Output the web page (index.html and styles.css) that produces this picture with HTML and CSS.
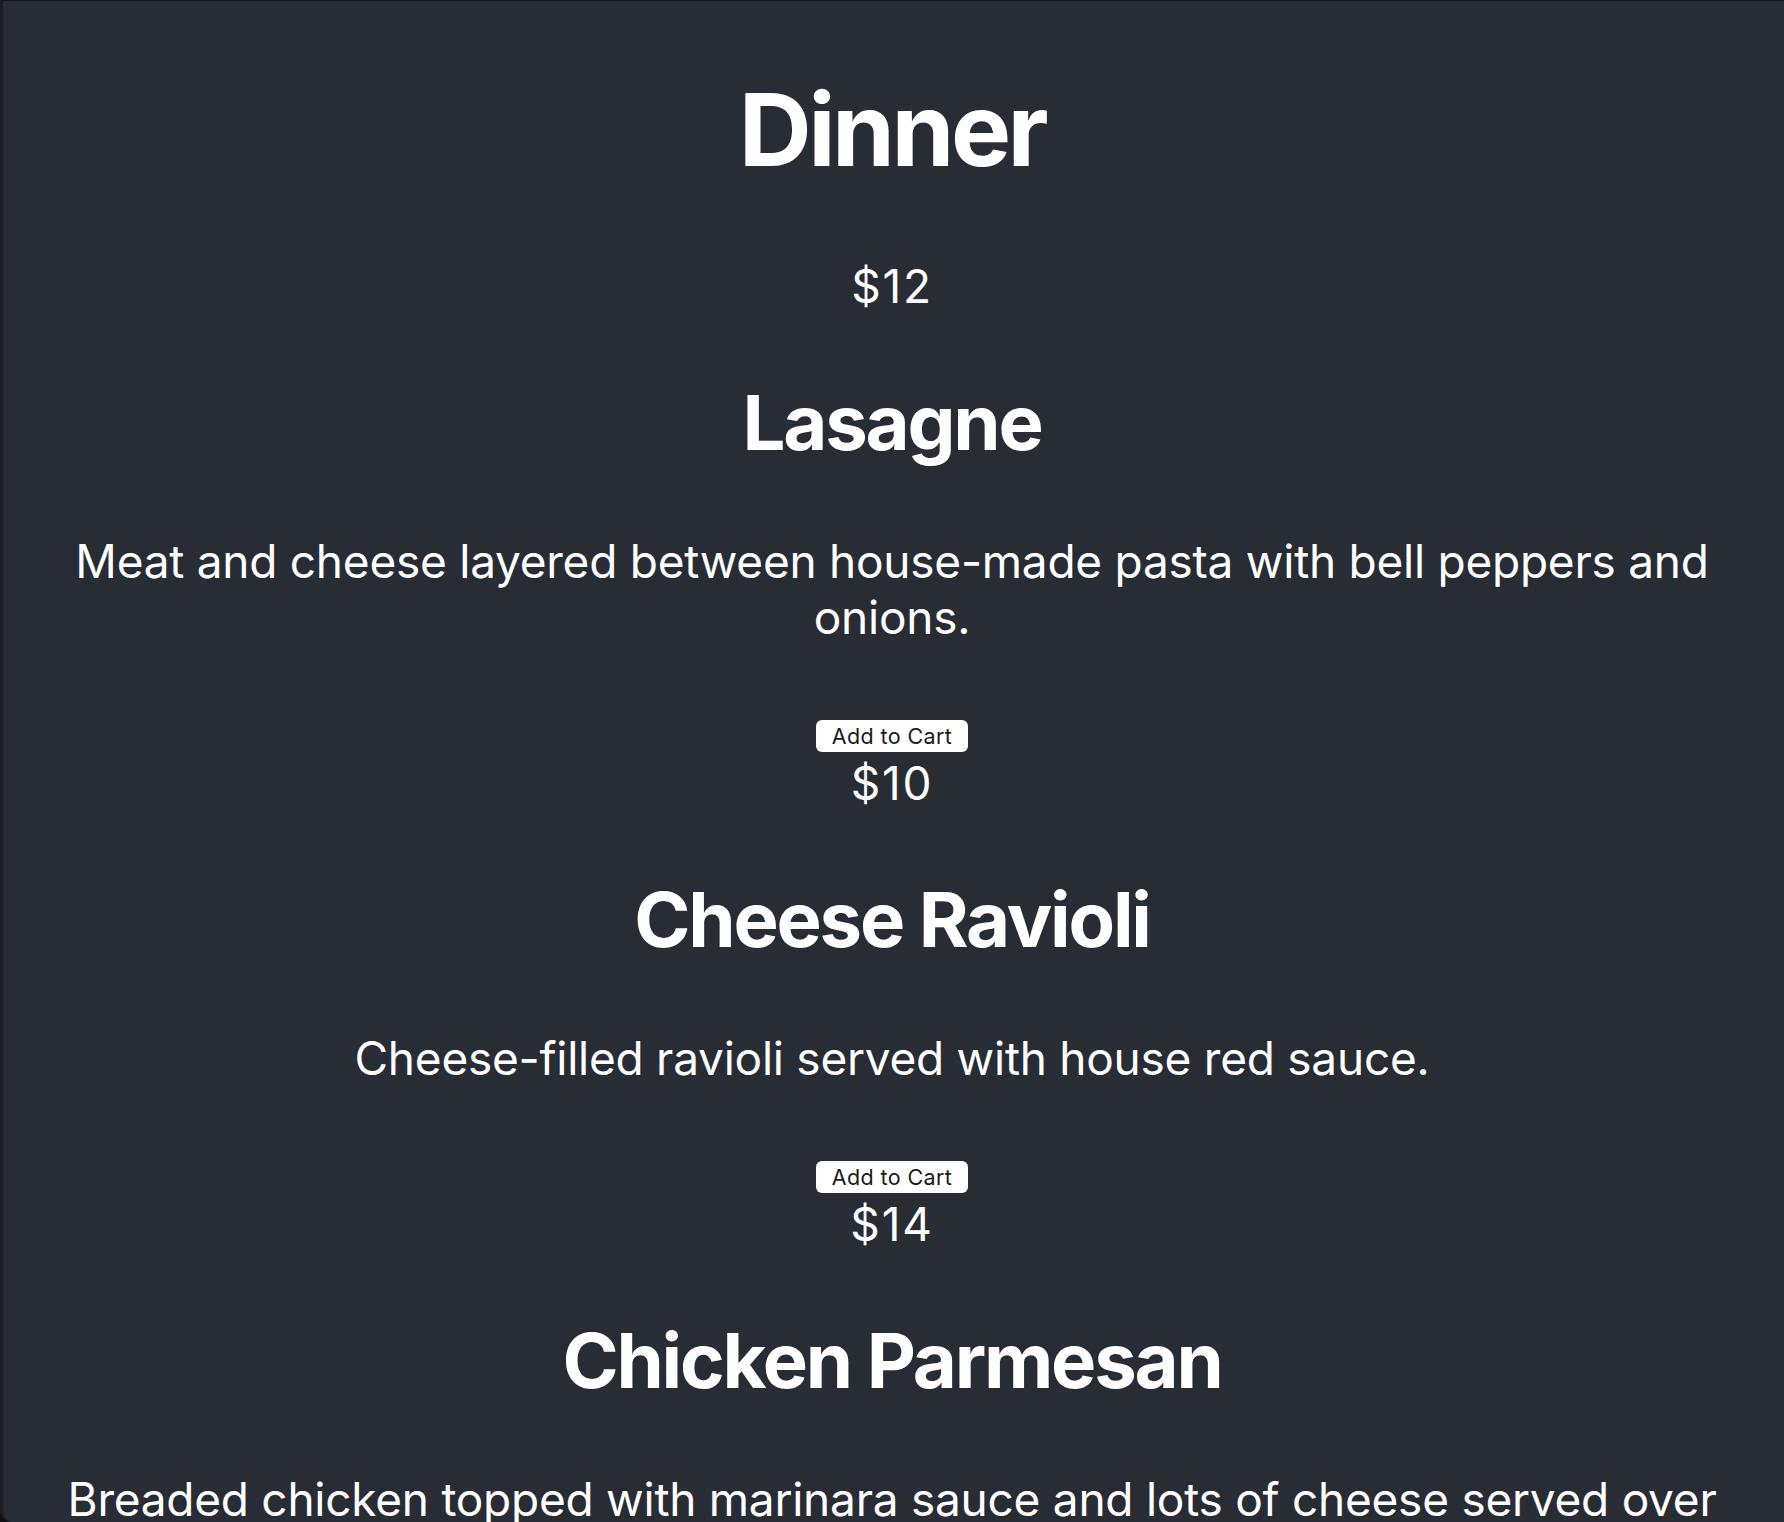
FILE: index.html
```html
<!DOCTYPE html>
<html lang="en">
<head>
<meta charset="utf-8">
<title>Dinner</title>
<link rel="stylesheet" href="styles.css">
</head>
<body>
<div class="window">
  <main class="menu">
    <h1 class="menu-title">Dinner</h1>
    <section class="item">
      <p class="price">$12</p>
      <h2 class="name">Lasagne</h2>
      <p class="desc">Meat and cheese layered between house-made pasta with bell peppers and onions.</p>
      <button class="add">Add to Cart</button>
    </section>
    <section class="item">
      <p class="price">$10</p>
      <h2 class="name">Cheese Ravioli</h2>
      <p class="desc">Cheese-filled ravioli served with house red sauce.</p>
      <button class="add">Add to Cart</button>
    </section>
    <section class="item">
      <p class="price">$14</p>
      <h2 class="name">Chicken Parmesan</h2>
      <p class="desc">Breaded chicken topped with marinara sauce and lots of cheese served over spaghetti.</p>
      <button class="add">Add to Cart</button>
    </section>
  </main>
</div>
</body>
</html>
```

FILE: styles.css
```css
html, body {
  margin: 0;
  padding: 0;
  background: #0e0f11;
}

.window {
  height: 1522px;
  overflow: hidden;
  background: #282c34;
  border-top: 1px solid #16181c;
  border-left: 3px solid #1c1e23;
  border-bottom-left-radius: 12px;
  box-sizing: border-box;
}

.menu {
  font-family: Inter, "Noto Sans", sans-serif;
  color: #ffffff;
  text-align: center;
  padding: 67px 40px 0 37px;
  display: flex;
  flex-direction: column;
  align-items: center;
}

.menu-title {
  font-size: 101px;
  font-weight: 700;
  letter-spacing: -3.5px;
  margin: 0 0 68px;
}

.item {
  display: flex;
  flex-direction: column;
  align-items: center;
  width: 100%;
}

.price {
  font-size: 46px;
  letter-spacing: 1.8px;
  margin: 0 0 62px;
}

.name {
  font-size: 76px;
  font-weight: 700;
  letter-spacing: -2.2px;
  margin: 0 0 65px;
}

.desc {
  font-size: 46px;
  letter-spacing: -0.25px;
  margin: 0 0 75px;
}

.add {
  font-family: Inter, "Noto Sans", sans-serif;
  font-size: 21.5px;
  letter-spacing: 0.4px;
  color: #1a1a1a;
  background: #ffffff;
  border: none;
  border-radius: 6px;
  width: 152px;
  height: 32px;
  padding: 0;
  margin: 0 0 3px;
}
```
